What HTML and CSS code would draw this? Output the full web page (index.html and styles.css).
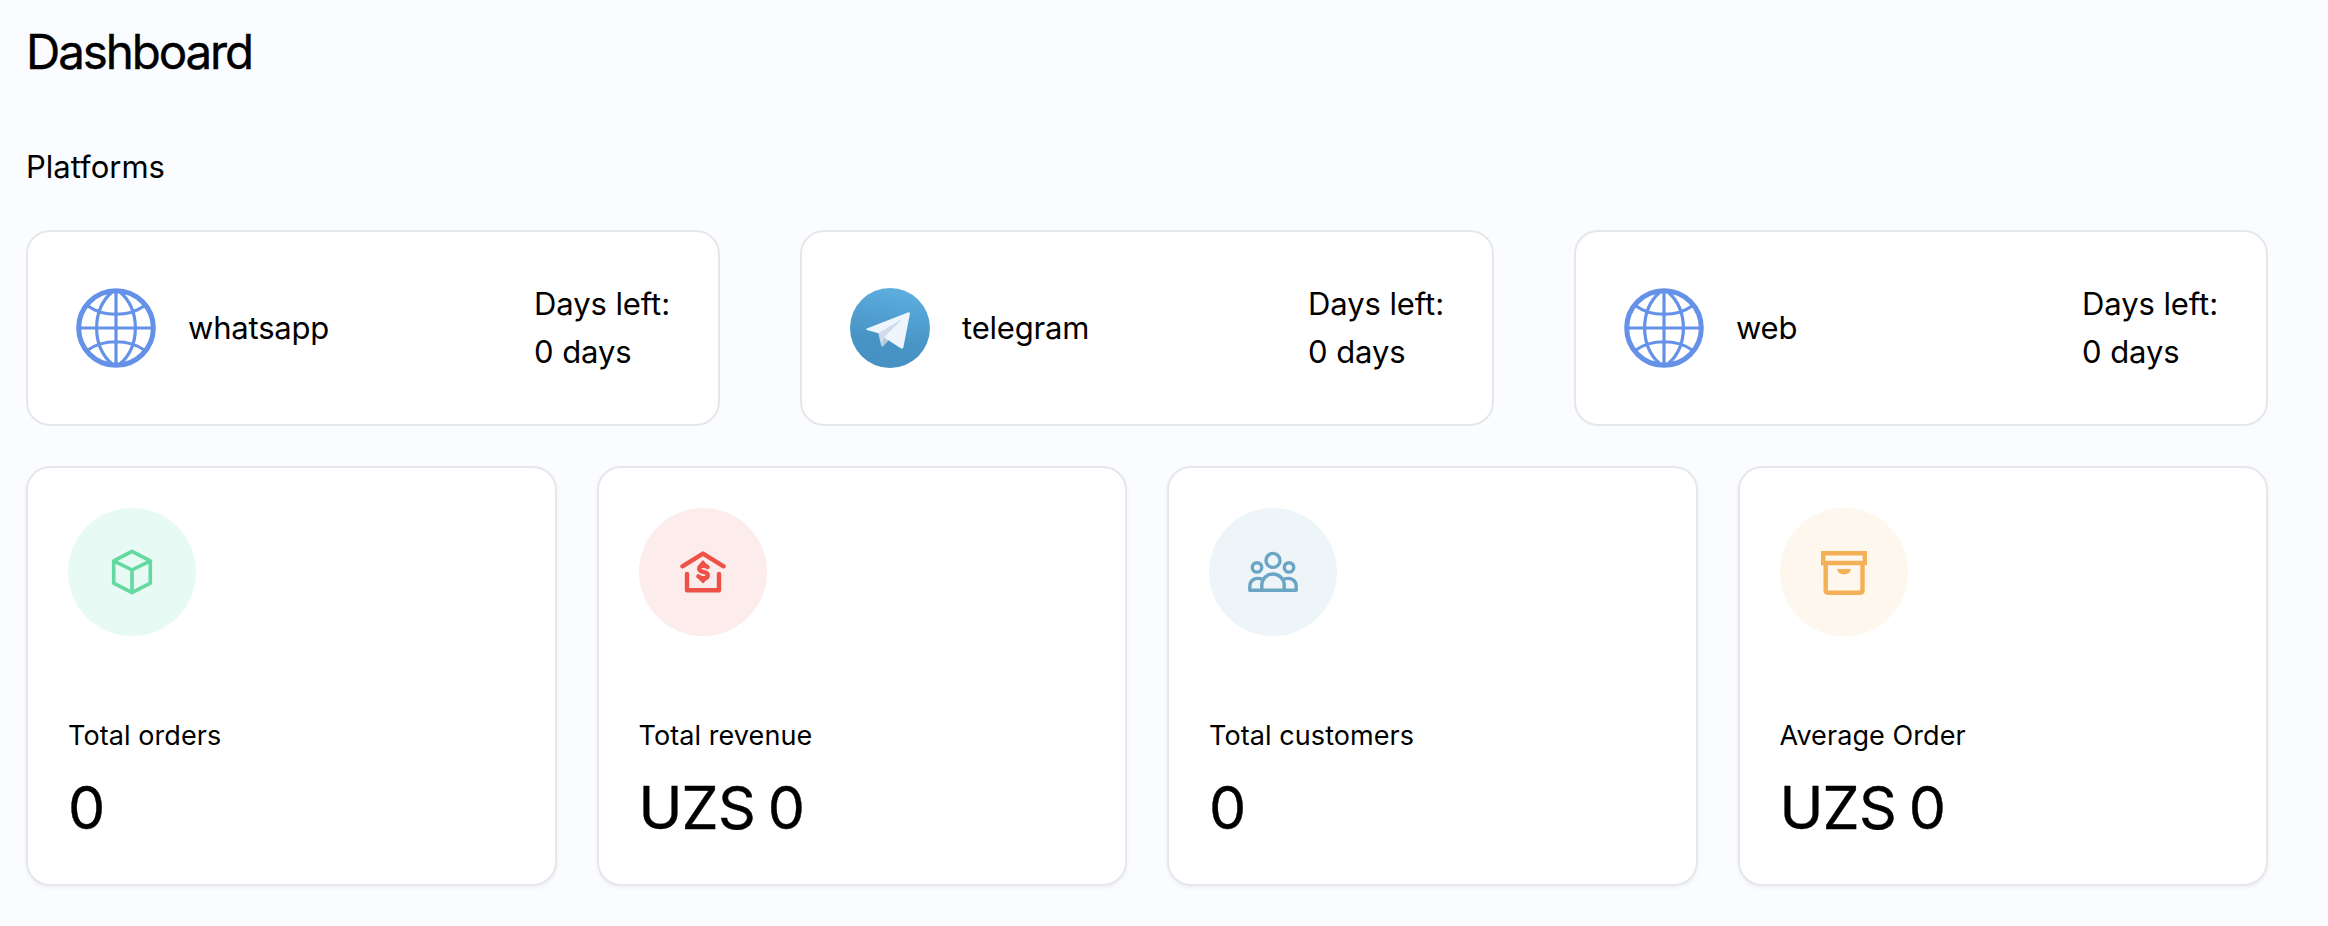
FILE: index.html
```html
<!DOCTYPE html>
<html lang="en">
<head>
    <meta charset="UTF-8">
    <meta name="viewport" content="width=device-width, initial-scale=1.0">
    <title>Dashboard</title>
    <link rel="stylesheet" href="styles.css">
</head>
<body>
    <svg class="sprite">
        <symbol id="globe" viewBox="0 0 80 80">
            <g fill="none" stroke="#6592e8">
                <circle cx="40" cy="40" r="37.3" stroke-width="5"/>
                <path stroke-width="3.2" d="M40 3V77M3 40H77M36 4C15.5 22 15.5 58 36 76M44 4C64.5 22 64.5 58 44 76M12 18C27 29 53 29 68 18M12 62C27 51 53 51 68 62"/>
            </g>
        </symbol>
    </svg>

    <main class="dashboard">
        <h1>Dashboard</h1>
        <h2>Platforms</h2>

        <div class="platforms">
            <div class="platform">
                <svg class="logo"><use href="#globe"/></svg>
                <span class="name">whatsapp</span>
                <div class="days">Days left:<br>0 days</div>
            </div>
            <div class="platform">
                <svg class="logo" viewBox="0 0 80 80">
                    <defs>
                        <linearGradient id="sky" x1="0.6" y1="0" x2="0.4" y2="1">
                            <stop offset="0" stop-color="#5eaee0"/>
                            <stop offset="0.65" stop-color="#4894c5"/>
                            <stop offset="1" stop-color="#4690c2"/>
                        </linearGradient>
                    </defs>
                    <circle cx="40" cy="40" r="40" fill="url(#sky)"/>
                    <path fill="#cddbeb" d="M28 44L53 30L38 52.5L33 58.2Q31.7 59 31.3 57.5Z"/>
                    <path fill="#b3c9dc" d="M34 49.5L38.5 52.5L33 58.2Q31.8 58.8 31.8 57.5Z"/>
                    <path fill="#eff5fc" d="M16.8 40.4L58.5 24.2Q60.2 23.9 59.9 25.8L53.4 59.3Q52.8 61.5 50.8 60.3L34 49.5L52 31L28.5 45.2L16.8 42Q15.2 41.1 16.8 40.4Z"/>
                </svg>
                <span class="name">telegram</span>
                <div class="days">Days left:<br>0 days</div>
            </div>
            <div class="platform">
                <svg class="logo"><use href="#globe"/></svg>
                <span class="name">web</span>
                <div class="days">Days left:<br>0 days</div>
            </div>
        </div>

        <div class="stats">
            <div class="card">
                <div class="icon green">
                    <svg viewBox="0 0 56 56" stroke-width="3.6" stroke-linejoin="round">
                        <path d="M28 7.4L46.3 16.8V39.2L28 48.6L9.7 39.2V16.8ZM9.7 16.8L28 26L46.3 16.8M28 26V48.6"/>
                    </svg>
                </div>
                <p class="label">Total orders</p>
                <p class="value">0</p>
            </div>
            <div class="card">
                <div class="icon red">
                    <svg viewBox="0 0 56 56" stroke-width="4.4" stroke-linecap="round" stroke-linejoin="round">
                        <path d="M7.4 22.3L28 9.6L48.6 22.3M12 30V46.2H44V30"/>
                        <path stroke-width="4.4" d="M32.6 22.9C30.5 21.3 24.2 21 24.2 24.8C24.2 29 32.8 26.8 32.8 31.2C32.8 35 26 35 23.4 32.4"/>
                        <path stroke-width="1.4" fill="currentColor" d="M28 17L31.5 21H24.5ZM28 38.6L31.5 35H24.5Z"/>
                    </svg>
                </div>
                <p class="label">Total revenue</p>
                <p class="value">UZS 0</p>
            </div>
            <div class="card">
                <div class="icon blue">
                    <svg viewBox="0 0 56 56" stroke-width="3.4" stroke-linejoin="round">
                        <circle cx="28" cy="16.4" r="7"/>
                        <circle cx="12" cy="23.4" r="4.7"/>
                        <circle cx="44" cy="23.4" r="4.7"/>
                        <path d="M16.8 46.3V41.2a11.2 11.2 0 0 1 22.4 0V46.3M17.5 35.4C10.5 32.6 4.8 36.4 4.8 42V46.3H51.2V42C51.2 36.4 45.5 32.6 38.5 35.4"/>
                    </svg>
                </div>
                <p class="label">Total customers</p>
                <p class="value">0</p>
            </div>
            <div class="card">
                <div class="icon orange">
                    <svg viewBox="0 0 56 56" stroke-width="4.4">
                        <path d="M7.2 9.3H48.8V19H7.2ZM9.7 19V46.5Q9.7 48.7 11.9 48.7H44.3Q46.5 48.7 46.5 46.5V19"/>
                        <path stroke="none" fill="currentColor" d="M21 25H35Q34 30.4 28 30.4Q22 30.4 21 25Z"/>
                    </svg>
                </div>
                <p class="label">Average Order</p>
                <p class="value">UZS 0</p>
            </div>
        </div>
    </main>
</body>
</html>
```
FILE: styles.css
```css
* {
    box-sizing: border-box;
    margin: 0;
}
body {
    font-family: Inter, "Liberation Sans", sans-serif;
    font-size: 31px;
    line-height: 48px;
    color: #000;
    background-color: #fbfcff;
}
.sprite {
    display: none;
}
.dashboard {
    padding: 16px 60px 40px 26px;
}
h1 {
    font-size: 47.5px;
    line-height: 72px;
    font-weight: 400;
    letter-spacing: -2.1px;
    -webkit-text-stroke: 0.4px #000;
}
h2 {
    margin-top: 55px;
    font-size: 31px;
    line-height: 48px;
    font-weight: 400;
    letter-spacing: 0;
}
.platforms {
    display: grid;
    grid-template-columns: repeat(3, 1fr);
    gap: 80px;
    margin-top: 39px;
}
.platform {
    display: flex;
    align-items: center;
    padding: 48px;
    background: white;
    border: 2px solid #e5e7eb;
    border-radius: 24px;
    letter-spacing: -0.2px;
}
.logo {
    width: 80px;
    height: 80px;
    margin-right: 32px;
}
.days {
    margin-left: auto;
    letter-spacing: -0.1px;
}
.stats {
    display: grid;
    grid-template-columns: repeat(4, 1fr);
    gap: 40px;
    margin-top: 40px;
}
.card {
    height: 420px;
    padding: 40px;
    background: white;
    border: 2px solid #e5e7eb;
    border-radius: 24px;
    box-shadow: 0 2px 4px rgba(0, 0, 0, 0.05);
}
.icon {
    display: flex;
    align-items: center;
    justify-content: center;
    width: 128px;
    height: 128px;
    border-radius: 50%;
}
.icon svg {
    width: 56px;
    height: 56px;
    fill: none;
    stroke: currentColor;
}
.green {
    color: #63d9a1;
    background-color: #e7faf4;
}
.red {
    color: #ee5147;
    background-color: #fdecec;
}
.blue {
    color: #6ba5c4;
    background-color: #edf5f9;
}
.orange {
    color: #f4b056;
    background-color: #fef7ed;
}
.label {
    margin-top: 80px;
    font-size: 27px;
    line-height: 40px;
    letter-spacing: 0.08px;
}
.value {
    margin-top: 16px;
    font-size: 59px;
    line-height: 72px;
    letter-spacing: -0.8px;
    word-spacing: -3px;
    -webkit-text-stroke: 0.4px #000;
}
```
